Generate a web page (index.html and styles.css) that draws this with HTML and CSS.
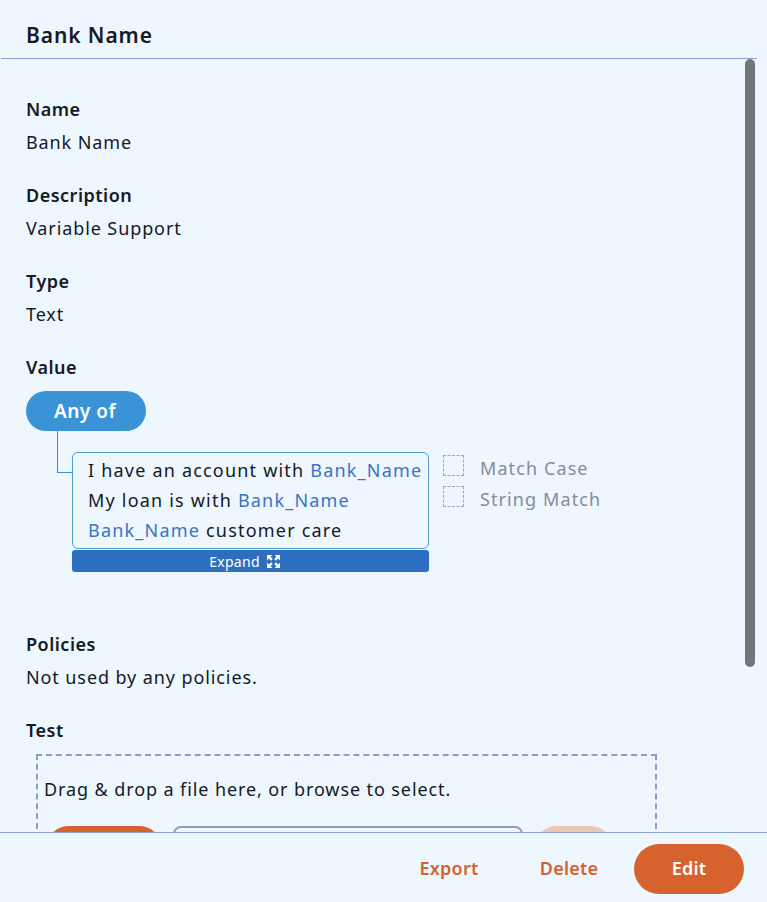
FILE: index.html
```html
<!DOCTYPE html>
<html>
<head>
<meta charset="utf-8">
<link rel="stylesheet" href="styles.css">
</head>
<body>
<div class="panel">
  <header class="head">
    <h1 class="title">Bank Name</h1>
  </header>
  <div class="body-row">
    <main class="scroll">
      <div class="content">
        <section class="field">
          <div class="label">Name</div>
          <div class="value">Bank Name</div>
        </section>
        <section class="field">
          <div class="label">Description</div>
          <div class="value">Variable Support</div>
        </section>
        <section class="field">
          <div class="label">Type</div>
          <div class="value">Text</div>
        </section>
        <section class="field field-value">
          <div class="label">Value</div>
          <div class="tree">
            <div class="pill">Any of</div>
            <div class="branch">
              <div class="connector"></div>
              <div class="card">
                <div class="phrases">
                  <div class="phrase">I have an account with <span class="var">Bank_Name</span></div>
                  <div class="phrase">My loan is with <span class="var">Bank_Name</span></div>
                  <div class="phrase"><span class="var">Bank_Name</span> customer care</div>
                </div>
                <div class="expand">Expand
                  <svg class="expand-icon" viewBox="0 0 12 12" width="13" height="13">
                    <g fill="#fff">
                      <polygon points="0,0 5,0 3.3,1.7 5.3,3.7 3.7,5.3 1.7,3.3 0,5"/>
                      <polygon points="12,0 12,5 10.3,3.3 8.3,5.3 6.7,3.7 8.7,1.7 7,0"/>
                      <polygon points="0,12 0,7 1.7,8.7 3.7,6.7 5.3,8.3 3.3,10.3 5,12"/>
                      <polygon points="12,12 7,12 8.7,10.3 6.7,8.3 8.3,6.7 10.3,8.7 12,7"/>
                    </g>
                  </svg>
                </div>
              </div>
              <div class="options">
                <label class="option"><span class="check"></span>Match Case</label>
                <label class="option"><span class="check"></span>String Match</label>
              </div>
            </div>
          </div>
        </section>
        <section class="field">
          <div class="label">Policies</div>
          <div class="value">Not used by any policies.</div>
        </section>
        <section class="field">
          <div class="label">Test</div>
          <div class="drop">
            <div class="drop-text">Drag &amp; drop a file here, or browse to select.</div>
            <div class="drop-row">
              <button class="btn-browse" aria-label="Browse"></button>
              <div class="file-input"></div>
              <button class="btn-test" aria-label="Test"></button>
            </div>
          </div>
        </section>
      </div>
    </main>
    <div class="scrollbar"><div class="thumb"></div></div>
  </div>
  <footer class="foot">
    <button class="btn-text">Export</button>
    <button class="btn-text">Delete</button>
    <button class="btn-primary">Edit</button>
  </footer>
</div>
</body>
</html>
```

FILE: styles.css
```css
* { box-sizing: border-box; }
html, body {
  margin: 0;
  padding: 0;
  background: #eef6fe;
}
body {
  font-family: "Noto Sans", "Open Sans", sans-serif;
  color: #141a26;
  width: 767px;
  height: 902px;
  overflow: hidden;
}
.panel {
  display: flex;
  flex-direction: column;
  height: 902px;
}
.head {
  margin-left: 1px;
  width: 756px;
  height: 59px;
  border-bottom: 1px solid #8da2d2;
  padding: 21px 0 0 25px;
}
.title {
  margin: 0;
  font-size: 21px;
  font-weight: 600;
  letter-spacing: 0.9px;
  line-height: 28px;
}
.body-row {
  display: flex;
  margin-left: 1px;
  width: 756px;
  height: 773px;
}
.scroll {
  flex: 1;
  overflow: hidden;
}
.scrollbar {
  width: 12px;
  padding-right: 1px;
}
.thumb {
  width: 10px;
  height: 608px;
  border-radius: 5px;
  background: #6f7778;
}
.content {
  padding: 38px 0 170px 25px;
}
.field {
  margin-bottom: 29px;
}
.label {
  font-size: 18px;
  font-weight: 600;
  letter-spacing: 0.5px;
  line-height: 24px;
  margin-bottom: 9px;
}
.value {
  font-size: 18px;
  letter-spacing: 0.9px;
  line-height: 24px;
}
.field-value .label {
  margin-bottom: 12px;
}
.field-value {
  margin-bottom: 60px;
}
.tree {
  display: flex;
  flex-direction: column;
  align-items: flex-start;
}
.pill {
  height: 40px;
  width: 120px;
  border-radius: 20px;
  background: #3993d6;
  color: #fff;
  font-size: 19px;
  font-weight: 600;
  letter-spacing: 0.5px;
  display: flex;
  align-items: center;
  justify-content: center;
  padding: 0 2px 1px 0;
}
.branch {
  display: flex;
  align-items: flex-start;
  margin-top: 21px;
  margin-left: 31px;
}
.connector {
  width: 15px;
  height: 42px;
  margin-top: -21px;
  border-left: 1px solid #3a8fd2;
  border-bottom: 1px solid #3a8fd2;
}
.card {
  width: 357px;
}
.phrases {
  border: 1px solid #4b9bd8;
  border-radius: 6px;
  padding: 2px 0 3px 15px;
  font-size: 18px;
  letter-spacing: 1.2px;
  line-height: 30px;
  white-space: nowrap;
}
.var {
  color: #3b74c6;
}
.expand {
  margin-top: 1px;
  height: 22px;
  background: #2d6fbe;
  border-radius: 3px;
  color: #fff;
  font-size: 14px;
  letter-spacing: 0.3px;
  display: flex;
  align-items: center;
  justify-content: center;
  gap: 7px;
  padding-right: 12px;
}
.expand-icon {
  display: block;
  margin-top: 1px;
}
.options {
  margin-left: 14px;
  margin-top: 4px;
  display: flex;
  flex-direction: column;
  gap: 10px;
}
.option {
  display: flex;
  align-items: center;
  height: 21px;
  color: #878d97;
  font-size: 18px;
  letter-spacing: 1.1px;
  padding-top: 2px;
}
.check {
  width: 21px;
  height: 21px;
  margin-top: -4px;
  border: 1px dashed #9aa8c6;
  margin-right: 16px;
}
.drop {
  margin-top: 12px;
  margin-left: 10px;
  width: 621px;
  border: 2px dashed #8e9ec2;
  padding: 21px 0 20px 6px;
}
.drop-text {
  font-size: 18px;
  letter-spacing: 0.9px;
  line-height: 24px;
}
.drop-row {
  margin-top: 25px;
  display: flex;
  align-items: center;
  padding-left: 4px;
  gap: 13px;
}
.btn-browse {
  width: 112px;
  height: 40px;
  border: none;
  border-radius: 20px;
  background: #d6632d;
}
.file-input {
  width: 350px;
  height: 40px;
  border: 2px solid #8e9ec2;
  border-radius: 8px;
}
.btn-test {
  width: 75px;
  height: 40px;
  border: none;
  border-radius: 20px;
  background: #ecc7b5;
}
.foot {
  height: 70px;
  border-top: 1px solid #8da2d2;
  display: flex;
  align-items: center;
  justify-content: flex-end;
  gap: 10px;
  padding-right: 23px;
  padding-top: 2px;
}
.btn-text, .btn-primary {
  width: 110px;
  height: 50px;
  border: none;
  border-radius: 25px;
  font-family: inherit;
  font-size: 18px;
  font-weight: 600;
  letter-spacing: 0.2px;
  background: transparent;
  color: #d6632d;
  padding: 0 0 2px;
}
.btn-primary {
  background: #d6632d;
  color: #fff;
}
```
